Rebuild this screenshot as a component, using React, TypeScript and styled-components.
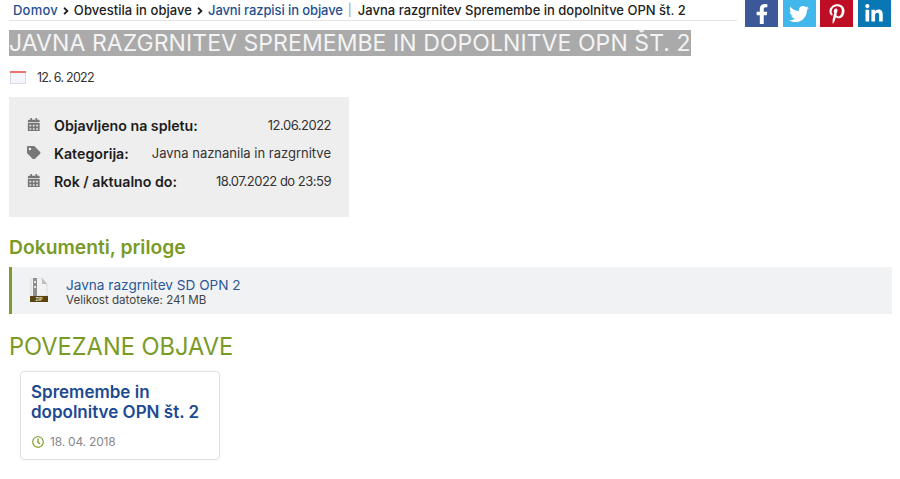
import { createGlobalStyle, styled } from 'styled-components';
import { FaAngleRight, FaCalendarAlt, FaFacebookF, FaLinkedinIn, FaPinterestP, FaRegClock, FaTag, FaTwitter } from 'react-icons/fa';

const GlobalStyle = createGlobalStyle`
  body {
    margin: 0;
    background: #fff;
    font-family: Inter, "Open Sans", sans-serif;
    color: #222;
  }
`;

const Page = styled.div`
  width: 900px;
  height: 479px;
  padding: 0 8px 0 9px;
  box-sizing: border-box;
  overflow: hidden;
`;

const Top = styled.div`
  display: grid;
  grid-template-columns: 728px 1fr;
  column-gap: 8px;
`;

const Crumbs = styled.div`
  height: 21px;
  box-sizing: border-box;
  padding: 0 0 1px 4px;
  display: flex;
  align-items: center;
  border-bottom: 1px solid #e4e4e4;
  font-size: 13px;
  font-weight: 500;
  white-space: nowrap;
`;

const CrumbLink = styled.a<{ $blue?: boolean; $spacing?: number }>`
  color: ${p => (p.$blue ? '#1f4f8f' : '#222')};
  letter-spacing: ${p => p.$spacing ?? 0}px;
`;

const Sep = styled.span`
  display: flex;
  align-items: center;
  justify-content: center;
  width: 16px;
  margin-top: 2px;
  font-size: 12px;
  color: #222;
`;

const Bar = styled.span`
  margin: 0 6px 0 5px;
  color: #999;
  font-size: 12px;
  font-weight: 400;
`;

const Title = styled.h1`
  display: inline-block;
  margin: 9px 0 0;
  padding: 0;
  height: 26px;
  line-height: 27px;
  background: #aaa;
  color: #f4f4f4;
  font-size: 23px;
  font-weight: 400;
  white-space: nowrap;
  letter-spacing: 0.07px;
`;

const Social = styled.div`
  display: flex;
  gap: 4.6px;
  align-items: flex-start;
`;

const SocialBtn = styled.a<{ $bg: string }>`
  width: 33px;
  height: 27px;
  display: flex;
  align-items: center;
  justify-content: center;
  background: ${p => p.$bg};
  color: #fff;
  font-size: 20px;
  padding-top: 1px;
  box-sizing: border-box;
`;

const DateRow = styled.div`
  display: flex;
  align-items: center;
  gap: 11px;
  margin-top: 13px;
  height: 16px;
  padding-left: 1px;
  font-size: 12.5px;
  letter-spacing: -0.75px;
  color: #333;
`;

const InfoBox = styled.div`
  width: 340px;
  height: 120px;
  margin-top: 12px;
  padding: 19px 18px 0 18px;
  box-sizing: border-box;
  background: #eee;
  display: flex;
  flex-direction: column;
  gap: 10px;
`;

const InfoRow = styled.div`
  display: flex;
  align-items: center;
  height: 18px;
  font-size: 13px;
  color: #333;
`;

const InfoIcon = styled.span`
  width: 27px;
  display: flex;
  align-items: center;
  font-size: 13.5px;
  color: #777;
  margin-top: -1px;
`;

const InfoLabel = styled.strong`
  font-size: 14.2px;
  font-weight: 600;
  color: #1c1c1c;
  flex: 1;
  white-space: nowrap;
`;

const InfoValue = styled.span<{ $numeric?: boolean }>`
  letter-spacing: ${p => (p.$numeric ? '-0.5px' : '0')};
`;

const SectionTitle = styled.h2`
  margin: 19px 0 0;
  font-size: 19.3px;
  line-height: 22px;
  font-weight: 600;
  color: #7a9a26;
`;

const FileRow = styled.div`
  display: flex;
  align-items: center;
  height: 47px;
  margin-top: 9px;
  background: #f1f2f4;
  border-left: 3px solid #7f9a2e;
  padding-left: 18px;
  gap: 18px;
`;

const FileText = styled.div`
  display: flex;
  flex-direction: column;
  padding-top: 3px;
`;

const FileLink = styled.a`
  font-size: 13.6px;
  line-height: 16px;
  color: #2b5797;
`;

const FileSize = styled.span`
  font-size: 11.6px;
  line-height: 14px;
  color: #444;
`;

const RelatedTitle = styled.h2`
  margin: 20px 0 0;
  font-size: 23.6px;
  line-height: 26px;
  font-weight: 400;
  color: #7a9a26;
`;

const Card = styled.div`
  width: 200px;
  height: 89px;
  margin: 11px 0 0 11px;
  padding: 10px 10px 0;
  box-sizing: border-box;
  border: 1px solid #e2e2e2;
  border-radius: 4px;
  box-shadow: 0 0 2px rgba(0, 0, 0, 0.06);
`;

const CardTitle = styled.a`
  display: block;
  font-size: 17px;
  line-height: 20px;
  font-weight: 600;
  color: #1d4a91;
`;

const CardDate = styled.div`
  display: flex;
  align-items: center;
  gap: 6px;
  margin-top: 12px;
  margin-left: 1px;
  font-size: 12px;
  color: #888;
  letter-spacing: -0.2px;

  svg {
    color: #7a9a26;
    font-size: 12px;
  }
`;

function CalendarIcon() {
  return (
    <svg width="16" height="13" viewBox="0 0 16 13">
      <rect x="0.5" y="0.5" width="15" height="12" fill="#f3f6fb" stroke="#d9d9e2" />
      <rect x="0" y="0" width="16" height="2" fill="#f0726c" />
    </svg>
  );
}

function ZipIcon() {
  return (
    <svg width="18" height="25" viewBox="0 0 18 25">
      <path d="M1 0h11l5 6v12H1z" fill="#f2f2f2" stroke="#cfcfcf" strokeWidth="0.6" />
      <path d="M12 0v6h5z" fill="#bdbdbd" />
      <rect x="3" y="0" width="4" height="18" fill="#8f8f8f" />
      <rect x="4" y="3" width="2" height="2" fill="#e4e4e4" />
      <rect x="4" y="8" width="2" height="2" fill="#e4e4e4" />
      <rect x="0" y="18" width="18" height="6" fill="#5a4510" />
      <text x="9" y="23" textAnchor="middle" fontSize="4.5" fontWeight="700" fill="#f0e6c0" fontFamily="Liberation Sans, sans-serif">ZIP</text>
    </svg>
  );
}

export default function App() {
  return (
    <Page>
      <GlobalStyle />
      <Top>
        <div>
          <Crumbs>
            <CrumbLink $blue $spacing={0.2}>Domov</CrumbLink>
            <Sep><FaAngleRight /></Sep>
            <CrumbLink $spacing={0.05}>Obvestila in objave</CrumbLink>
            <Sep><FaAngleRight /></Sep>
            <CrumbLink $blue $spacing={-0.1}>Javni razpisi in objave</CrumbLink>
            <Bar>|</Bar>
            <CrumbLink>Javna razgrnitev Spremembe in dopolnitve OPN št. 2</CrumbLink>
          </Crumbs>
          <Title>JAVNA RAZGRNITEV SPREMEMBE IN DOPOLNITVE OPN ŠT. 2</Title>
        </div>
        <Social>
          <SocialBtn $bg="#3b5998"><FaFacebookF /></SocialBtn>
          <SocialBtn $bg="#41b7ec"><FaTwitter /></SocialBtn>
          <SocialBtn $bg="#bd0e25"><FaPinterestP /></SocialBtn>
          <SocialBtn $bg="#0a77b5"><FaLinkedinIn /></SocialBtn>
        </Social>
      </Top>

      <DateRow>
        <CalendarIcon />
        12. 6. 2022
      </DateRow>

      <InfoBox>
        <InfoRow>
          <InfoIcon><FaCalendarAlt /></InfoIcon>
          <InfoLabel>Objavljeno na spletu:</InfoLabel>
          <InfoValue $numeric>12.06.2022</InfoValue>
        </InfoRow>
        <InfoRow>
          <InfoIcon><FaTag /></InfoIcon>
          <InfoLabel>Kategorija:</InfoLabel>
          <InfoValue>Javna naznanila in razgrnitve</InfoValue>
        </InfoRow>
        <InfoRow>
          <InfoIcon><FaCalendarAlt /></InfoIcon>
          <InfoLabel>Rok / aktualno do:</InfoLabel>
          <InfoValue $numeric>18.07.2022 do 23:59</InfoValue>
        </InfoRow>
      </InfoBox>

      <SectionTitle>Dokumenti, priloge</SectionTitle>
      <FileRow>
        <ZipIcon />
        <FileText>
          <FileLink>Javna razgrnitev SD OPN 2</FileLink>
          <FileSize>Velikost datoteke: 241 MB</FileSize>
        </FileText>
      </FileRow>

      <RelatedTitle>POVEZANE OBJAVE</RelatedTitle>
      <Card>
        <CardTitle>Spremembe in dopolnitve OPN št. 2</CardTitle>
        <CardDate><FaRegClock /> 18. 04. 2018</CardDate>
      </Card>
    </Page>
  );
}
